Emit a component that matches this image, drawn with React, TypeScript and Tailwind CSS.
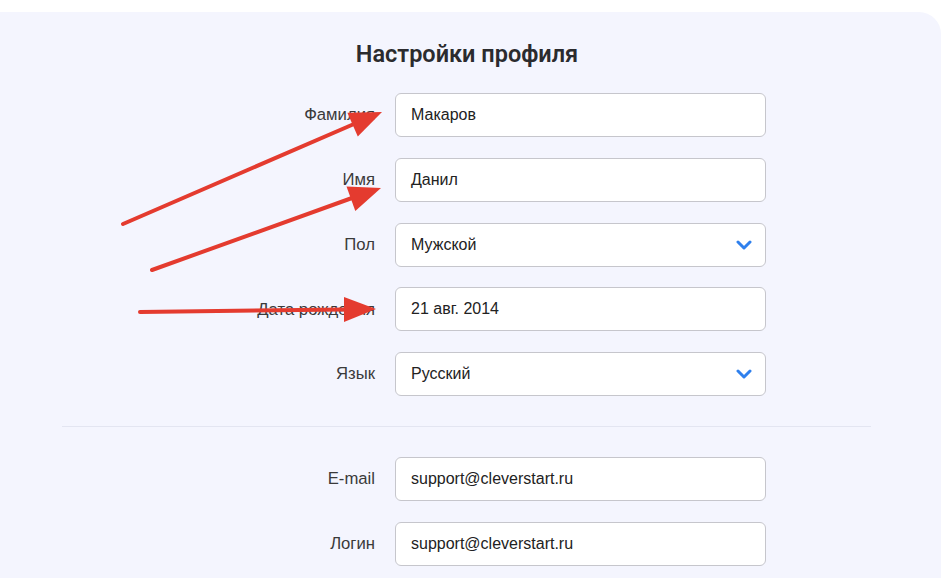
const font = { fontFamily: '"Liberation Sans", Arial, sans-serif' };

interface Field {
  label: string;
  value: string;
  select?: boolean;
}

const personal: Field[] = [
  { label: 'Фамилия', value: 'Макаров' },
  { label: 'Имя', value: 'Данил' },
  { label: 'Пол', value: 'Мужской', select: true },
  { label: 'Дата рождения', value: '21 авг. 2014' },
  { label: 'Язык', value: 'Русский', select: true },
];

const account: Field[] = [
  { label: 'E-mail', value: 'support@cleverstart.ru' },
  { label: 'Логин', value: 'support@cleverstart.ru' },
];

function Chevron() {
  return (
    <svg width="16" height="10" viewBox="0 0 16 10" fill="none">
      <polyline
        points="2,2 8,8 14,2"
        stroke="#2f80ed"
        strokeWidth="3"
        strokeLinecap="round"
        strokeLinejoin="round"
      />
    </svg>
  );
}

function Row({ label, value, select }: Field) {
  return (
    <div className="flex items-center">
      <div className="w-[375px] text-right text-[16.7px] text-[#3a3a3a]">{label}</div>
      <div className="ml-[20px] flex h-[44px] w-[371px] items-center justify-between rounded-[6px] border border-[#c6c6cc] bg-white pl-[15px] pr-[13px] text-[16px] text-[#222]">
        <span>{value}</span>
        {select && <Chevron />}
      </div>
    </div>
  );
}

function Arrows() {
  const red = '#e43b2f';
  return (
    <svg className="pointer-events-none absolute left-0 top-0" width="950" height="578">
      <g stroke={red} strokeWidth="4" strokeLinecap="round">
        <line x1="123" y1="224" x2="354" y2="124" />
        <line x1="152" y1="270" x2="352" y2="198" />
        <line x1="140" y1="312" x2="346" y2="309.5" />
      </g>
      <g fill={red}>
        <polygon points="382,112 357.8,136.6 347.4,112.8" />
        <polygon points="381,188 355.3,211 346.5,186.6" />
        <polygon points="376,309 344,322 344,297" />
      </g>
    </svg>
  );
}

export default function App() {
  return (
    <div className="relative h-[578px] w-[950px] overflow-hidden bg-white" style={font}>
      <div className="mr-[9px] mt-[12px] h-[600px] rounded-tr-[22px] bg-[#f4f5fe]">
        <h1
          className="pr-[7px] pt-[25px] text-center text-[23.5px] font-semibold leading-[34px] text-[#2b2b2e]"
          style={{ fontFamily: 'Roboto, "Liberation Sans", sans-serif' }}
        >
          Настройки профиля
        </h1>
        <div className="mt-[22px] flex flex-col gap-[20.75px]">
          {personal.map((f) => (
            <Row key={f.label} {...f} />
          ))}
        </div>
        <div className="mx-[62px] mb-[30px] mt-[30px] h-px w-[809px] bg-[#e3e5f1]" />
        <div className="flex flex-col gap-[21px]">
          {account.map((f) => (
            <Row key={f.label} {...f} />
          ))}
        </div>
      </div>
      <Arrows />
    </div>
  );
}
